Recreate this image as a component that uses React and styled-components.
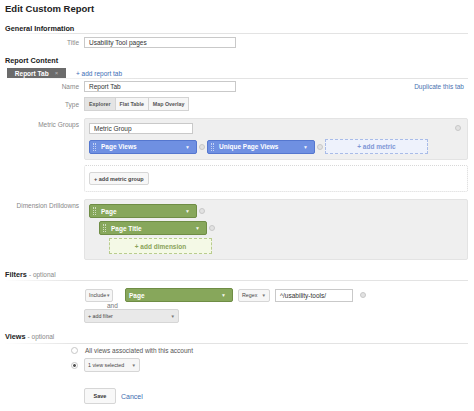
import styled, { createGlobalStyle } from "styled-components";

const GlobalStyle = createGlobalStyle`
  html, body {
    margin: 0;
    padding: 0;
    background: #ffffff;
  }
  body {
    font-family: "Liberation Sans", Arial, sans-serif;
    color: #333;
  }
`;

const Page = styled.div`
  width: 474px;
  height: 411px;
  box-sizing: border-box;
  padding: 0 6px 0 5px;
  overflow: hidden;
`;

const Title = styled.h1`
  margin: 0;
  height: 16px;
  display: flex;
  align-items: center;
  font-size: 9.5px;
  font-weight: bold;
  color: #222;
`;

const SectionHead = styled.div`
  margin-top: ${(p) => p.$top || 0}px;
  height: ${(p) => p.$h || 11}px;
  display: flex;
  align-items: center;
  font-size: 7.3px;
  font-weight: bold;
  color: #222;
  ${(p) =>
    p.$line &&
    `
    border-bottom: 1px solid transparent;
    border-image: linear-gradient(to right, rgba(225,225,225,0) 0%, #e3e3e3 15%, #e3e3e3 100%) 1;
  `}
`;

const Optional = styled.span`
  font-weight: normal;
  color: #888;
  font-size: 6.5px;
  margin-left: 2px;
`;

const TabBar = styled.div`
  display: flex;
  align-items: flex-end;
  gap: 10px;
  margin-top: 2px;
  height: 10px;
  padding-left: 2px;
  border-bottom: 1px solid transparent;
  border-image: linear-gradient(to right, rgba(225,225,225,0) 0%, #e3e3e3 30%, #e3e3e3 100%) 1;
`;

const DarkTab = styled.div`
  width: 59px;
  height: 10px;
  box-sizing: border-box;
  background: #6b6b6b;
  color: #fff;
  font-size: 6.5px;
  font-weight: bold;
  display: flex;
  align-items: center;
  justify-content: center;
  gap: 6px;
`;

const TabClose = styled.span`
  color: #bbb;
  font-weight: normal;
  font-size: 6px;
`;

const SmallLink = styled.a`
  color: #3b6cb5;
  font-size: 6.5px;
  text-decoration: none;
  margin-bottom: 1px;
`;

const Row = styled.div`
  display: grid;
  grid-template-columns: 74px 1fr;
  column-gap: 5px;
  margin-top: ${(p) => p.$top || 0}px;
  align-items: ${(p) => (p.$start ? "start" : "center")};
`;

const Label = styled.div`
  text-align: right;
  font-size: 6.5px;
  color: #888;
  white-space: nowrap;
  padding-top: ${(p) => p.$pt || 0}px;
`;

const Field = styled.div`
  display: flex;
  align-items: center;
`;

const TextInput = styled.div`
  width: ${(p) => p.$w || 152}px;
  height: ${(p) => p.$h || 11}px;
  box-sizing: border-box;
  border: 1px solid #c9c9c9;
  background: #fff;
  font-size: 6.5px;
  color: #333;
  padding-left: 4px;
  display: flex;
  align-items: center;
`;

const RightLink = styled(SmallLink)`
  margin-left: auto;
  margin-bottom: 0;
  margin-right: 4px;
  color: #4a73b0;
`;

const ButtonGroup = styled.div`
  display: flex;
  height: 14px;
  margin-left: 1px;
`;

const SegButton = styled.div`
  height: 14px;
  box-sizing: border-box;
  padding: 0 4px;
  border: 1px solid #d3d3d3;
  margin-left: -1px;
  background: ${(p) => (p.$active ? "#e4e4e4" : "#f6f6f6")};
  font-size: 5.3px;
  font-weight: bold;
  color: #555;
  display: flex;
  align-items: center;
`;

const GreyBox = styled.div`
  position: relative;
  box-sizing: border-box;
  height: ${(p) => p.$h}px;
  background: #efefef;
  border: 1px solid #e3e3e3;
  border-radius: 2px;
  padding: 4px;
  display: flex;
  flex-direction: column;
  gap: ${(p) => p.$gap || 5}px;
`;

const Stack = styled.div`
  display: flex;
  flex-direction: column;
  gap: 5px;
`;

const DottedBox = styled.div`
  box-sizing: border-box;
  height: 27px;
  border: 1px dotted #d8d8d8;
  border-radius: 2px;
  padding: 6px 4px;
  display: flex;
  align-items: center;
`;

const Pill = styled.div`
  width: ${(p) => p.$w || 108}px;
  height: 14px;
  box-sizing: border-box;
  background: ${(p) => (p.$green ? "#87a75b" : "#6f90e2")};
  border: 1px solid ${(p) => (p.$green ? "#6f8d45" : "#5577cf")};
  border-radius: 2px;
  color: #fff;
  font-size: 6.5px;
  font-weight: bold;
  display: flex;
  align-items: center;
  padding: 0 6px 0 3px;
  gap: 5px;
`;

const Grip = styled.span`
  height: 8px;
  width: 1px;
  border-left: 1px dotted rgba(255, 255, 255, 0.6);
  border-right: 1px dotted rgba(255, 255, 255, 0.6);
`;

const Caret = styled.span`
  margin-left: auto;
  font-size: 5px;
  color: rgba(255, 255, 255, 0.9);
`;

const RemoveDot = styled.span`
  width: 4px;
  height: 4px;
  border-radius: 50%;
  border: 1px solid #c8c8c8;
  background: #e2e2e2;
  margin: 0 2px;
  flex: none;
`;

const CornerDot = styled(RemoveDot)`
  position: absolute;
  right: 6px;
  top: 6px;
  margin: 0;
`;

const AddBox = styled.div`
  width: ${(p) => p.$w || 103}px;
  height: ${(p) => p.$h || 15}px;
  box-sizing: border-box;
  border: 1px dashed ${(p) => (p.$green ? "#b9cc8e" : "#a9bce8")};
  background: ${(p) => (p.$green ? "#f4f9e6" : "#eef2fc")};
  color: ${(p) => (p.$green ? "#8aa35a" : "#7f97d6")};
  font-size: 6.5px;
  font-weight: bold;
  display: flex;
  align-items: center;
  justify-content: center;
`;

const Indent = styled.div`
  display: flex;
  align-items: center;
  padding-left: ${(p) => p.$pl}px;
`;

const SmallButton = styled.div`
  height: 13px;
  box-sizing: border-box;
  padding: 0 4px;
  border: 1px solid #d6d6d6;
  background: #f7f7f7;
  border-radius: 2px;
  font-size: 5.5px;
  font-weight: bold;
  color: #444;
  display: flex;
  align-items: center;
`;

const Select = styled.div`
  width: ${(p) => p.$w}px;
  height: ${(p) => p.$h || 13}px;
  box-sizing: border-box;
  border: 1px solid #d6d6d6;
  background: ${(p) => (p.$grey ? "#e9e9e9" : "#f6f6f6")};
  border-radius: 2px;
  font-size: 5.3px;
  color: #444;
  display: flex;
  align-items: center;
  padding: 0 3px;
  margin-left: ${(p) => p.$ml || 0}px;
`;

const SelectCaret = styled.span`
  margin-left: auto;
  font-size: 4.5px;
  color: #777;
`;

const Spacer = styled.div`
  width: ${(p) => p.$w}px;
  flex: none;
`;

const AndText = styled.div`
  font-size: 6.5px;
  color: #777;
  margin-left: 23px;
  line-height: 7px;
`;

const RadioRow = styled.div`
  display: flex;
  align-items: center;
  height: ${(p) => p.$h || 8}px;
  margin-top: ${(p) => p.$top || 0}px;
`;

const Radio = styled.span`
  width: 5px;
  height: 5px;
  border-radius: 50%;
  border: 1px solid #c6c6c6;
  background: ${(p) =>
    p.$on ? "radial-gradient(circle, #555 0 1.2px, #fff 1.6px)" : "#fff"};
  margin: 0 7px 0 66px;
  flex: none;
`;

const RadioText = styled.span`
  font-size: 6.5px;
  color: #555;
`;

const Actions = styled.div`
  display: flex;
  align-items: center;
  gap: 5px;
  margin: 16px 0 0 79px;
`;

const SaveButton = styled.div`
  width: 32px;
  height: 16px;
  box-sizing: border-box;
  border: 1px solid #d6d6d6;
  background: #f8f8f8;
  border-radius: 2px;
  font-size: 5.5px;
  font-weight: bold;
  color: #333;
  display: flex;
  align-items: center;
  justify-content: center;
`;

const CancelLink = styled(SmallLink)`
  font-size: 7px;
  margin: 0;
  color: #3d6cb0;
`;

function MetricPill({ children, green, w }) {
  return (
    <Pill $green={green} $w={w}>
      <Grip />
      <span>{children}</span>
      <Caret>▼</Caret>
    </Pill>
  );
}

export default function App() {
  return (
    <Page>
      <GlobalStyle />
      <Title>Edit Custom Report</Title>

      <SectionHead $top={7} $h={10} $line>
        General Information
      </SectionHead>
      <Row $top={3}>
        <Label>Title</Label>
        <Field>
          <TextInput>Usability Tool pages</TextInput>
        </Field>
      </Row>

      <SectionHead $top={7}>Report Content</SectionHead>
      <TabBar>
        <DarkTab>
          Report Tab <TabClose>×</TabClose>
        </DarkTab>
        <SmallLink>+ add report tab</SmallLink>
      </TabBar>

      <Row $top={2}>
        <Label>Name</Label>
        <Field>
          <TextInput>Report Tab</TextInput>
          <RightLink>Duplicate this tab</RightLink>
        </Field>
      </Row>

      <Row $top={5}>
        <Label>Type</Label>
        <Field>
          <ButtonGroup>
            <SegButton $active>Explorer</SegButton>
            <SegButton>Flat Table</SegButton>
            <SegButton>Map Overlay</SegButton>
          </ButtonGroup>
        </Field>
      </Row>

      <Row $top={7} $start>
        <Label $pt={3}>Metric Groups</Label>
        <Stack>
          <GreyBox $h={42}>
            <TextInput $w={104}>Metric Group</TextInput>
            <Field>
              <MetricPill>Page Views</MetricPill>
              <RemoveDot />
              <MetricPill>Unique Page Views</MetricPill>
              <RemoveDot />
              <AddBox>+ add metric</AddBox>
            </Field>
            <CornerDot />
          </GreyBox>
          <DottedBox>
            <SmallButton>+ add metric group</SmallButton>
          </DottedBox>
        </Stack>
      </Row>

      <Row $top={7} $start>
        <Label $pt={3}>Dimension Drilldowns</Label>
        <GreyBox $h={61} $gap={3}>
          <Indent $pl={0}>
            <MetricPill green>Page</MetricPill>
            <RemoveDot />
          </Indent>
          <Indent $pl={10}>
            <MetricPill green>Page Title</MetricPill>
            <RemoveDot />
          </Indent>
          <Indent $pl={20}>
            <AddBox $green $h={16}>
              + add dimension
            </AddBox>
          </Indent>
        </GreyBox>
      </Row>

      <SectionHead $top={9} $h={11} $line>
        Filters <Optional>- optional</Optional>
      </SectionHead>
      <Row $top={7}>
        <div />
        <Field>
          <Select $w={28} $ml={1}>
            Include <SelectCaret>▼</SelectCaret>
          </Select>
          <Spacer $w={12} />
          <Pill $green $w={108}>
            <span>Page</span>
            <Caret>▼</Caret>
          </Pill>
          <Spacer $w={5} />
          <Select $w={32}>
            Regex <SelectCaret>▼</SelectCaret>
          </Select>
          <Spacer $w={5} />
          <TextInput $w={78} $h={13}>
            ^/usability-tools/
          </TextInput>
          <Spacer $w={5} />
          <RemoveDot />
        </Field>
      </Row>
      <Row>
        <div />
        <AndText>and</AndText>
      </Row>
      <Row>
        <div />
        <Field>
          <Select $w={95} $h={14} $grey>
            + add filter <SelectCaret>▼</SelectCaret>
          </Select>
        </Field>
      </Row>

      <SectionHead $top={7} $h={13} $line>
        Views <Optional>- optional</Optional>
      </SectionHead>
      <RadioRow $top={2}>
        <Radio />
        <RadioText>All views associated with this account</RadioText>
      </RadioRow>
      <RadioRow $top={4} $h={14}>
        <Radio $on />
        <Select $w={56} $h={14} $ml={-1}>
          1 view selected <SelectCaret>▼</SelectCaret>
        </Select>
      </RadioRow>

      <Actions>
        <SaveButton>Save</SaveButton>
        <CancelLink>Cancel</CancelLink>
      </Actions>
    </Page>
  );
}
